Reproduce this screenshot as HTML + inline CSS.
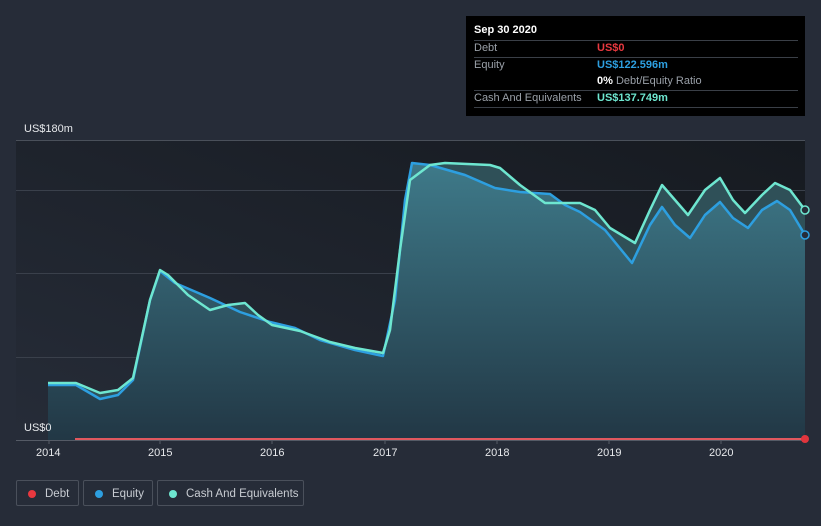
<!DOCTYPE html>
<html><head><style>
body{margin:0;width:821px;height:526px;background:#262c38;font-family:"Liberation Sans",sans-serif;overflow:hidden;position:relative}
.tt{position:absolute;left:466px;top:16px;width:339px;height:100px;background:#000;color:#9aa0a8;font-size:11px}
.tt .r{position:absolute;left:8px;width:324px;border-top:1px solid #3a3f47}
.lg{position:absolute;top:480px;height:26px;border:1px solid #4a505b;border-radius:2px;color:#c8ccd2;font-size:11.5px;line-height:26px;box-sizing:border-box}
.lg i{position:absolute;left:11px;top:9px;width:8px;height:8px;border-radius:50%}
.ax{position:absolute;top:447px;color:#e6e8eb;font-size:11px}
</style></head><body>
<svg width="821" height="526" style="position:absolute;left:0;top:0">
<defs>
<linearGradient id="bg" x1="0" y1="1" x2="1" y2="0"><stop offset="0" stop-color="#262c38"/><stop offset="1" stop-color="#161a20"/></linearGradient>
<linearGradient id="fa" x1="0" y1="0" x2="0" y2="1"><stop offset="0" stop-color="#3f7c8c"/><stop offset="1" stop-color="#213644"/></linearGradient>
</defs>
<rect x="16" y="140" width="789" height="300" fill="url(#bg)"/>
<g stroke="#3a404b" stroke-width="1"><line x1="16" y1="140.5" x2="805" y2="140.5" stroke="#4a505a"/><line x1="16" y1="190.5" x2="805" y2="190.5"/><line x1="16" y1="273.5" x2="805" y2="273.5"/><line x1="16" y1="357.5" x2="805" y2="357.5"/></g>
<polygon fill="#2f5058" points="48,383 76,383 100,393 118,390 133,378 150,300 160,270 168,275 188,295 210,310 228,305 245,303 258,315 272,325 300,331 330,342 355,348 383,353 390,330 400,250 410,180 430,165 445,163 490,165 500,168 520,185 545,203 580,203 595,210 610,228 635,243 650,210 662,185 675,200 688,215 705,190 720,178 733,200 745,213 762,195 775,183 790,190 805,210 805,440 48,440"/>
<polygon fill="url(#fa)" opacity="0.95" points="48,385 76,385 100,399 118,395 133,380 150,300 160,271 175,283 210,298 240,312 270,322 295,328 320,340 355,350 383,356 395,300 405,200 412,163 430,165 465,175 495,188 520,192 550,194 565,205 580,212 605,230 632,263 650,225 662,207 675,225 690,238 705,215 720,202 733,218 748,228 762,210 777,201 790,210 805,235 805,440 48,440"/>
<polyline fill="none" stroke="#2d9fe0" stroke-width="2.5" stroke-linejoin="round" points="48,385 76,385 100,399 118,395 133,380 150,300 160,271 175,283 210,298 240,312 270,322 295,328 320,340 355,350 383,356 395,300 405,200 412,163 430,165 465,175 495,188 520,192 550,194 565,205 580,212 605,230 632,263 650,225 662,207 675,225 690,238 705,215 720,202 733,218 748,228 762,210 777,201 790,210 805,235"/>
<polyline fill="none" stroke="#6ee6d0" stroke-width="2.5" stroke-linejoin="round" points="48,383 76,383 100,393 118,390 133,378 150,300 160,270 168,275 188,295 210,310 228,305 245,303 258,315 272,325 300,331 330,342 355,348 383,353 390,330 400,250 410,180 430,165 445,163 490,165 500,168 520,185 545,203 580,203 595,210 610,228 635,243 650,210 662,185 675,200 688,215 705,190 720,178 733,200 745,213 762,195 775,183 790,190 805,210"/>
<line x1="75" y1="439" x2="805" y2="439" stroke="#e0585e" stroke-width="2"/>
<line x1="16" y1="440.5" x2="805" y2="440.5" stroke="#555b66"/>
<g stroke="#555b66"><line x1="49" y1="440" x2="49" y2="444"/><line x1="160" y1="440" x2="160" y2="444"/><line x1="272" y1="440" x2="272" y2="444"/><line x1="385" y1="440" x2="385" y2="444"/><line x1="497" y1="440" x2="497" y2="444"/><line x1="609" y1="440" x2="609" y2="444"/><line x1="721" y1="440" x2="721" y2="444"/></g>
<circle cx="805" cy="210" r="4" fill="#262c38" stroke="#6ee6d0" stroke-width="1.5"/>
<circle cx="805" cy="235" r="4" fill="#262c38" stroke="#2d9fe0" stroke-width="1.5"/>
<circle cx="805" cy="439" r="4" fill="#e0353d"/>
</svg>
<div style="position:absolute;left:24px;top:123px;color:#e6e8eb;font-size:11px">US$180m</div>
<div style="position:absolute;left:24px;top:422px;color:#e6e8eb;font-size:11px">US$0</div>
<div class="ax" style="left:36px">2014</div><div class="ax" style="left:148px">2015</div><div class="ax" style="left:260px">2016</div><div class="ax" style="left:373px">2017</div><div class="ax" style="left:485px">2018</div><div class="ax" style="left:597px">2019</div><div class="ax" style="left:709px">2020</div>
<div class="tt">
<div style="position:absolute;left:8px;top:8px;color:#fff;font-weight:bold">Sep 30 2020</div>
<div class="r" style="top:24px"></div>
<div style="position:absolute;left:8px;top:26px">Debt</div><div style="position:absolute;left:131px;top:26px;color:#e8383f;font-weight:bold">US$0</div>
<div class="r" style="top:41px"></div>
<div style="position:absolute;left:8px;top:43px">Equity</div><div style="position:absolute;left:131px;top:43px;color:#2d9fe0;font-weight:bold">US$122.596m</div>
<div style="position:absolute;left:131px;top:59px"><b style="color:#fff">0%</b> Debt/Equity Ratio</div>
<div class="r" style="top:74px"></div>
<div style="position:absolute;left:8px;top:76px">Cash And Equivalents</div><div style="position:absolute;left:131px;top:76px;color:#6ee6d0;font-weight:bold">US$137.749m</div>
<div class="r" style="top:91px"></div>
</div>
<div class="lg" style="left:16px;width:63px"><i style="background:#e8383f"></i><span style="position:absolute;left:28px">Debt</span></div>
<div class="lg" style="left:83px;width:70px"><i style="background:#2d9fe0"></i><span style="position:absolute;left:28px">Equity</span></div>
<div class="lg" style="left:157px;width:147px"><i style="background:#6ee6d0"></i><span style="position:absolute;left:28px">Cash And Equivalents</span></div>
</body></html>
